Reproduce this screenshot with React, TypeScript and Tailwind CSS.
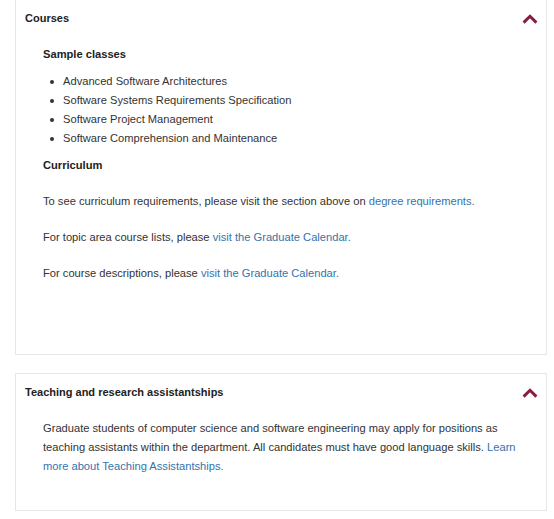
import React from "react";

function Chevron() {
  return (
    <svg width="16" height="10" viewBox="0 0 16 10" className="block">
      <path d="M1.6 8.6 L8 2.3 L14.4 8.6" fill="none" stroke="#8a1c3c" strokeWidth="3" strokeLinecap="butt" strokeLinejoin="miter" />
    </svg>
  );
}

function Header({ title }: { title: string }) {
  return (
    <div className="flex items-center justify-between pl-[9px] pr-[8px] pt-[9px]">
      <span className="font-bold text-[11px] leading-[19px] text-[#222]">{title}</span>
      <Chevron />
    </div>
  );
}

const link = "text-[#3573ad]";

export default function App() {
  const items = [
    "Advanced Software Architectures",
    "Software Systems Requirements Specification",
    "Software Project Management",
    "Software Comprehension and Maintenance",
  ];
  return (
    <div
      className="bg-white w-[554px] h-[519px] overflow-hidden text-[11.15px] leading-[19px] text-[#333]"
      style={{ fontFamily: '"Liberation Sans", Arial, sans-serif' }}
    >
      <div className="-mt-px ml-[15px] mr-[7px] border border-[#e6e6e6] bg-white">
        <Header title="Courses" />
        <div className="pl-[27px] pr-[11px] pb-[71px]">
          <h3 className="mt-[17px] font-bold text-[#222]">Sample classes</h3>
          <ul className="mt-[8px]">
            {items.map((t) => (
              <li key={t} className="flex items-center">
                <span className="ml-[7px] w-[4px] h-[4px] rounded-full bg-[#333]" />
                <span className="ml-[9px]">{t}</span>
              </li>
            ))}
          </ul>
          <h3 className="mt-[8px] font-bold text-[#222]">Curriculum</h3>
          <p className="mt-[17px]">
            To see curriculum requirements, please visit the section above on{" "}
            <span className={link}>degree requirements.</span>
          </p>
          <p className="mt-[17px]">
            For topic area course lists, please <span className={link}>visit the Graduate Calendar.</span>
          </p>
          <p className="mt-[17px]">
            For course descriptions, please <span className={link}>visit the Graduate Calendar.</span>
          </p>
        </div>
      </div>
      <div className="mt-[18px] ml-[15px] mr-[7px] border border-[#e6e6e6] bg-white">
        <Header title="Teaching and research assistantships" />
        <div className="pl-[27px] pr-[11px] pb-[34px]">
          <p className="mt-[17px]">
            Graduate students of computer science and software engineering may apply for positions as
            teaching assistants within the department. All candidates must have good language skills.{" "}
            <span className={link}>Learn more about Teaching Assistantships.</span>
          </p>
        </div>
      </div>
    </div>
  );
}
